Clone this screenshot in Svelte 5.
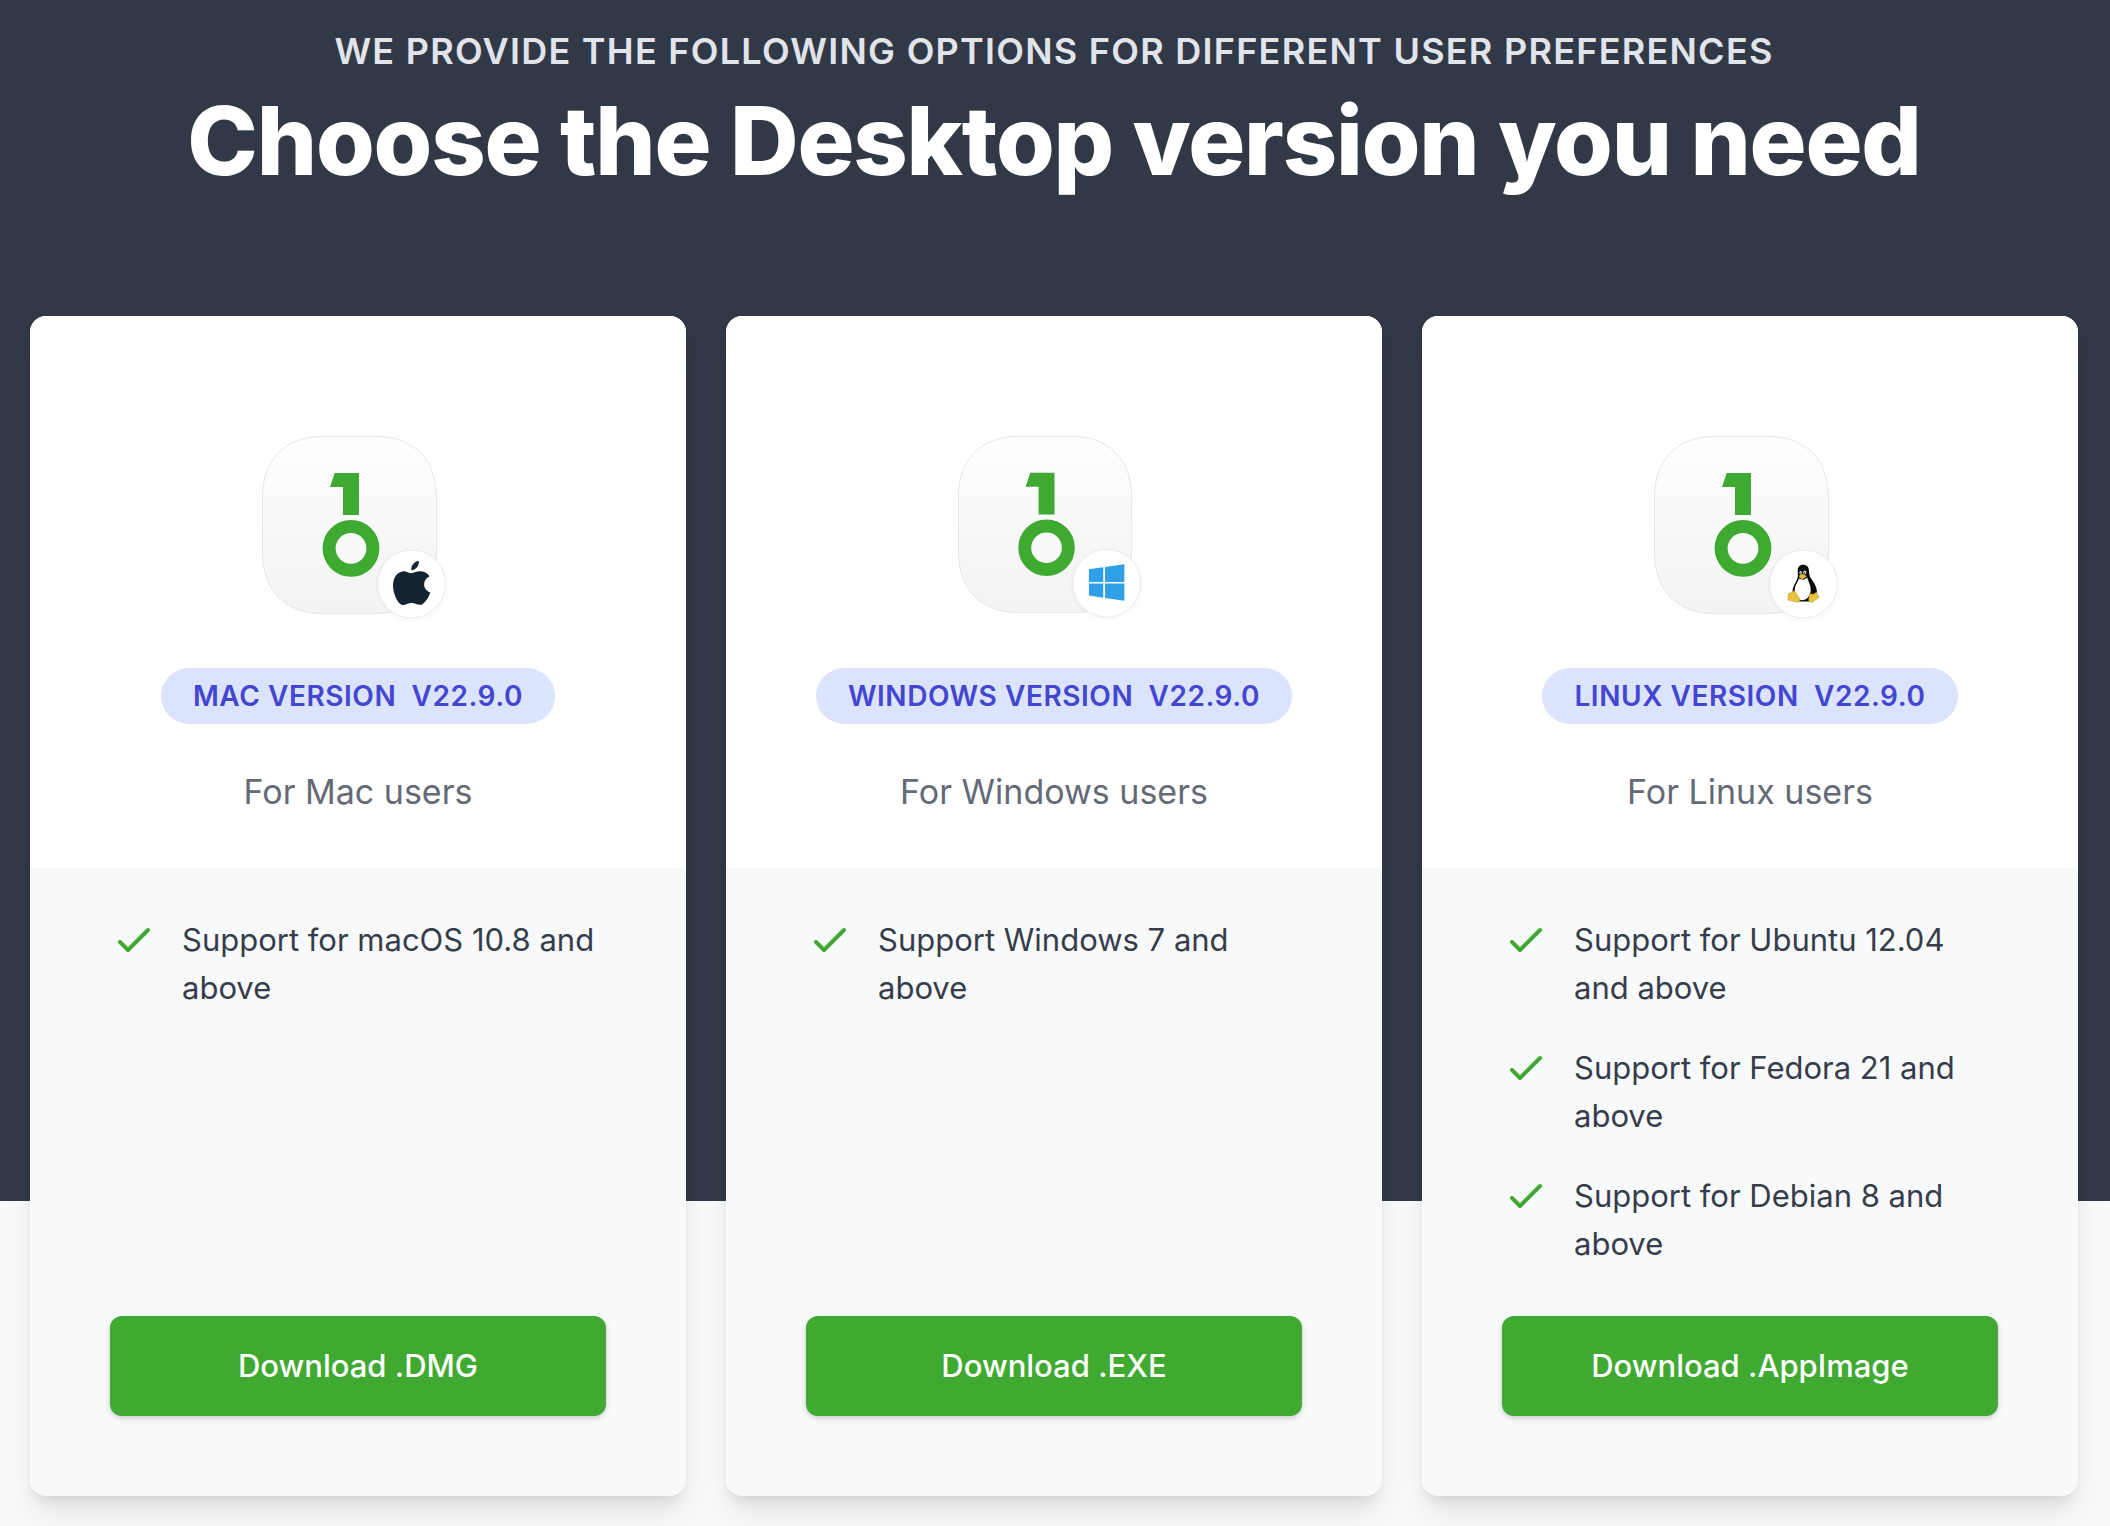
<script>
  const plans = [
    {
      id: 'mac',
      label: 'Mac version',
      audience: 'For Mac users',
      features: ['Support for macOS 10.8 and above'],
      action: 'Download .DMG',
      viewBox: '0 -2 200 204'
    },
    {
      id: 'windows',
      label: 'Windows version',
      audience: 'For Windows users',
      features: ['Support Windows 7 and above'],
      action: 'Download .EXE',
      viewBox: '0 -2 201 205'
    },
    {
      id: 'linux',
      label: 'Linux version',
      audience: 'For Linux users',
      features: [
        'Support for Ubuntu 12.04 and above',
        'Support for Fedora 21 and above',
        'Support for Debian 8 and above'
      ],
      action: 'Download .AppImage',
      viewBox: '0 -2 200 204'
    }
  ];
</script>

<main>
  <header>
    <h2>We provide the following options for different user preferences</h2>
    <h1>Choose the Desktop version you need</h1>
  </header>

  <section class="plans">
    {#each plans as plan (plan.id)}
      <article class="card">
        <div class="intro">
          <svg class="logo" viewBox={plan.viewBox} aria-hidden="true">
            <defs>
              <linearGradient id="tile-{plan.id}" x1="0" y1="0" x2="0" y2="1">
                <stop offset="0" stop-color="#fefefe" />
                <stop offset="1" stop-color="#f3f3f3" />
              </linearGradient>
              <filter id="lift-{plan.id}" x="-20%" y="-20%" width="140%" height="140%">
                <feDropShadow dx="0" dy="1" stdDeviation="2" flood-opacity="0.05" />
              </filter>
            </defs>
            <path
              d="M64 6.500H119C156 6.500 178.500 30 178.500 67V123C178.500 160 156 183.500 119 183.500H64C27 183.500 4.500 160 4.500 123V67C4.500 30 27 6.500 64 6.500Z"
              fill="url(#tile-{plan.id})"
              stroke="#e6e6e6"
            />
            <path d="M76.700 43H101V85H85V57H72Z" fill="#3fa932" />
            <circle cx="93" cy="118.300" r="21.900" fill="#fafafa" stroke="#3fa932" stroke-width="13" />
            <circle cx="153.500" cy="154" r="34" fill="#fff" stroke="#e9e9e9" filter="url(#lift-{plan.id})" />
            {#if plan.id === 'mac'}
              <path
                fill="#142433"
                d="M152.500 143.200C155.500 143.200 158.500 140.800 163 141.300C166.500 141.600 169.700 143.300 171.500 146.200C167.500 148.600 166.100 151.400 166.100 154.200C166.100 158 168.600 161 172.300 162.600C170.300 168.500 166.500 173.600 163.500 174.700C160 175.500 157.500 173 153.500 173C149.500 173 147.300 175.500 144 174.900C139.500 173.500 135 163.500 135 155.500C135 147 139.800 141.700 145.500 141.300C148.500 141.200 150.500 143.200 152.500 143.200ZM153.300 140.200C152.700 135.500 156.700 131.300 160.900 130.700C161.300 135.800 157.700 140.200 153.300 140.200Z"
              />
            {:else if plan.id === 'windows'}
              <path
                fill="#2f9fe8"
                d="M135.600 140L150 138V152.800H135.600ZM151.800 137.700L171.200 135V152.800H151.800ZM135.600 154.200H150V168.600L135.600 166.400ZM151.800 154.200H171.200V171.600L151.800 168.900Z"
              />
            {:else}
              <path
                fill="#0b0b0d"
                d="M153.200 134.700C149.300 134.700 147.500 137.300 147.700 141C147.900 145 148.300 147.300 146.300 151C144.500 154.300 142.600 157 142.500 161.500L141.800 166L149 171.500H160L166.800 163.500C167.600 158.500 164.500 153.300 161.800 149.500C159.400 146 159.200 144.500 159 140.800C158.800 137 157 134.700 153.200 134.700Z"
              />
              <path
                fill="#fff"
                d="M149 148.500C152 150.200 155 149.700 157.300 147.500C158 151.500 161 155 160.700 160.500C160.400 166 156.500 170.300 151.800 170.300C148 170.300 145 165 144.700 160.500C144.500 156 147.600 152.600 149 148.500Z"
              />
              <ellipse cx="150.700" cy="142.700" rx="1.300" ry="1.800" fill="#ddd" />
              <ellipse cx="154.800" cy="142.500" rx="1.600" ry="2" fill="#ddd" />
              <circle cx="151" cy="143.100" r="0.600" fill="#111" />
              <circle cx="154.600" cy="143" r="0.700" fill="#111" />
              <path fill="#e5b62f" d="M149 146C150.300 144.500 152 143.900 153.200 144.200L156.700 146C156.200 147.500 153.500 149 152 149C150.800 149 149 147.500 149 146Z" />
              <path
                fill="#e6c53c"
                stroke="#a9821c"
                stroke-width="0.400"
                d="M138.300 163.700C139.500 162.900 141 163.300 142 161.700C143 160.500 144.500 160.700 145.500 162.300L149.600 168.700C150.600 170.700 149.500 172.400 147 172.300C144.500 172 142.500 170.700 139 170.600C137.300 170.400 138.300 167.500 138.300 163.700Z"
              />
              <path
                fill="#e6c53c"
                stroke="#a9821c"
                stroke-width="0.400"
                d="M159.800 163.300C161.500 164.700 164 164.500 166 162.200C167.400 162.500 166.700 164.800 169 166.200C170.200 167.500 166.500 169 164.500 170.700C162.500 172.700 159.600 172.800 158.800 170.700C158.300 168.700 159.500 166 159.800 163.300Z"
              />
            {/if}
          </svg>
          <h3>{plan.label} &nbsp;v22.9.0</h3>
          <p>{plan.audience}</p>
        </div>

        <div class="details">
          <ul>
            {#each plan.features as feature}
              <li>
                <svg class="check" viewBox="0 0 24 24" aria-hidden="true">
                  <path d="M5 13l4 4L19 7" />
                </svg>
                <span>{feature}</span>
              </li>
            {/each}
          </ul>
          <a href="#{plan.id}">{plan.action}</a>
        </div>
      </article>
    {/each}
  </section>
</main>

<style>
  :global(body) {
    margin: 0;
    background: #f8f9fb;
  }

  main {
    font-family: Inter, 'Liberation Sans', sans-serif;
    padding-bottom: 30px;
    overflow: hidden;
  }

  h1, h2, h3, p, ul {
    margin: 0;
    padding: 0;
  }

  header {
    display: flex;
    flex-direction: column;
    gap: 18px;
    padding: 27px 32px 127px 30px;
    background: #323946;
    text-align: center;
  }

  h2 {
    color: #e2e4ec;
    font-size: 36px;
    font-weight: 600;
    line-height: 48px;
    letter-spacing: 0.035em;
    text-transform: uppercase;
  }

  h1 {
    color: #fff;
    font-size: 95px;
    font-weight: 800;
    line-height: 96px;
    letter-spacing: -0.0125em;
  }

  .plans {
    display: grid;
    grid-template-columns: repeat(3, 1fr);
    gap: 40px;
    padding: 0 32px 0 30px;
    background: linear-gradient(#323946 75%, #f8f9fb 75%);
  }

  .card {
    display: flex;
    flex-direction: column;
    border-radius: 16px;
    background: #f8f9fb;
    box-shadow: 0 20px 30px -6px rgba(0, 0, 0, 0.1), 0 8px 12px -4px rgba(0, 0, 0, 0.08);
  }

  .intro {
    display: flex;
    flex-direction: column;
    align-items: center;
    padding: 112px 48px 48px;
    border-radius: 16px 16px 0 0;
    background: #fff;
  }

  .logo {
    width: 200px;
    height: 204px;
    margin-bottom: 36px;
  }

  h3 {
    padding: 8px 32px;
    border-radius: 28px;
    background: #dce3fc;
    color: #4246d0;
    font-size: 28px;
    font-weight: 600;
    line-height: 40px;
    letter-spacing: 0.02em;
    text-transform: uppercase;
  }

  p {
    margin-top: 40px;
    color: #646a76;
    font-size: 34px;
    line-height: 56px;
  }

  .details {
    display: flex;
    flex: 1;
    flex-direction: column;
    justify-content: space-between;
    gap: 48px;
    padding: 48px 80px 80px;
  }

  ul {
    display: flex;
    flex-direction: column;
    gap: 32px;
    list-style: none;
  }

  li {
    display: flex;
    gap: 24px;
    color: #363d4a;
    font-size: 31px;
    line-height: 48px;
  }

  .check {
    flex: none;
    width: 48px;
    height: 48px;
    fill: none;
    stroke: #3fa932;
    stroke-width: 2;
    stroke-linecap: round;
    stroke-linejoin: round;
  }

  a {
    padding: 26px 40px;
    border-radius: 12px;
    background: #3fa932;
    box-shadow: 0 2px 6px rgba(0, 0, 0, 0.12), 0 2px 4px rgba(0, 0, 0, 0.08);
    color: #fff;
    font-size: 31px;
    font-weight: 500;
    line-height: 48px;
    text-align: center;
    text-decoration: none;
  }
</style>
